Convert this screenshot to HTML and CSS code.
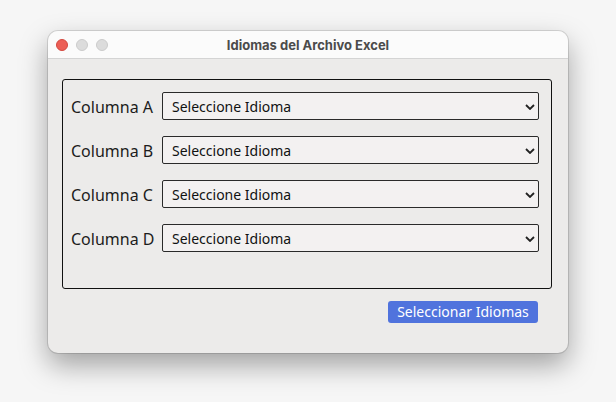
FILE: index.html
```html
<!DOCTYPE html>
<html lang="es">
<head>
<meta charset="utf-8">
<title>Idiomas del Archivo Excel</title>
<link rel="stylesheet" href="styles.css">
</head>
<body>
<div class="window">
  <div class="titlebar">
    <div class="lights">
      <span class="light red"></span>
      <span class="light gray"></span>
      <span class="light gray"></span>
    </div>
    <div class="title">Idiomas del Archivo Excel</div>
  </div>
  <div class="content">
    <div class="group">
      <div class="row">
        <label class="label">Columna A</label>
        <div class="select-wrap">
          <select class="select"><option>Seleccione Idioma</option></select>
          <svg class="chev" width="10" height="6" viewBox="0 0 10 6"><path d="M1 1 L5 5 L9 1" fill="none" stroke="#222" stroke-width="1.8"/></svg>
        </div>
      </div>
      <div class="row">
        <label class="label">Columna B</label>
        <div class="select-wrap">
          <select class="select"><option>Seleccione Idioma</option></select>
          <svg class="chev" width="10" height="6" viewBox="0 0 10 6"><path d="M1 1 L5 5 L9 1" fill="none" stroke="#222" stroke-width="1.8"/></svg>
        </div>
      </div>
      <div class="row">
        <label class="label">Columna C</label>
        <div class="select-wrap">
          <select class="select"><option>Seleccione Idioma</option></select>
          <svg class="chev" width="10" height="6" viewBox="0 0 10 6"><path d="M1 1 L5 5 L9 1" fill="none" stroke="#222" stroke-width="1.8"/></svg>
        </div>
      </div>
      <div class="row">
        <label class="label">Columna D</label>
        <div class="select-wrap">
          <select class="select"><option>Seleccione Idioma</option></select>
          <svg class="chev" width="10" height="6" viewBox="0 0 10 6"><path d="M1 1 L5 5 L9 1" fill="none" stroke="#222" stroke-width="1.8"/></svg>
        </div>
      </div>
    </div>
    <div class="actions">
      <button class="btn">Seleccionar Idiomas</button>
    </div>
  </div>
</div>
</body>
</html>
```
FILE: styles.css
```css
html, body {
  margin: 0;
  padding: 0;
}
body {
  background: #f6f6f6;
  width: 616px;
  height: 402px;
  overflow: hidden;
  font-family: "Noto Sans", sans-serif;
  padding-top: 31px;
  padding-left: 48px;
  box-sizing: border-box;
}
.window {
  width: 520px;
  height: 322px;
  border-radius: 10px;
  overflow: hidden;
  background: #ecebea;
  box-shadow: 0 0 0 1px rgba(0,0,0,0.12), 0 12px 28px rgba(0,0,0,0.35);
  display: flex;
  flex-direction: column;
}
.titlebar {
  height: 27px;
  flex: none;
  background: #fbfbfb;
  border-bottom: 1px solid #d4d4d4;
  position: relative;
  display: flex;
  align-items: center;
  justify-content: center;
}
.lights {
  position: absolute;
  left: 8px;
  top: 8px;
  display: flex;
  gap: 8px;
}
.light {
  width: 12px;
  height: 12px;
  border-radius: 50%;
  box-sizing: border-box;
}
.red {
  background: #ec5f56;
  border: 0.5px solid #d3483f;
}
.gray {
  background: #dcdcdc;
  border: 0.5px solid #cbcbcb;
}
.title {
  font-family: "Inter", "Noto Sans", sans-serif;
  font-weight: 700;
  font-size: 13px;
  color: #4b4b4b;
  margin-left: 0;
}
.content {
  padding: 20px 30px 0 14px;
  display: flex;
  flex-direction: column;
}
.group {
  width: 490px;
  box-sizing: border-box;
  border: 1px solid #111;
  border-radius: 3px;
  padding: 12px 12px 36px 8px;
  display: flex;
  flex-direction: column;
  gap: 16px;
}
.row {
  display: flex;
  align-items: center;
  height: 28px;
}
.label {
  width: 91px;
  font-size: 16px;
  color: #1c1c1c;
  padding-top: 2px;
}
.select-wrap {
  position: relative;
  flex: 1;
  height: 28px;
}
.select {
  appearance: none;
  -webkit-appearance: none;
  width: 100%;
  height: 28px;
  margin: 0;
  box-sizing: border-box;
  border: 1px solid #2a2a2a;
  border-radius: 2px;
  background: #f3f1f1;
  font-family: "Noto Sans", sans-serif;
  font-size: 14px;
  color: #111;
  padding: 0 0 0 9px;
  outline: none;
}
.chev {
  position: absolute;
  right: 4px;
  top: 12px;
}
.actions {
  display: flex;
  justify-content: flex-end;
  margin-top: 12px;
}
.btn {
  width: 150px;
  height: 22px;
  border: none;
  border-radius: 3px;
  background: #5073dd;
  color: #fff;
  font-family: "Noto Sans", sans-serif;
  font-size: 14px;
  padding: 0;
  line-height: 22px;
}
```
